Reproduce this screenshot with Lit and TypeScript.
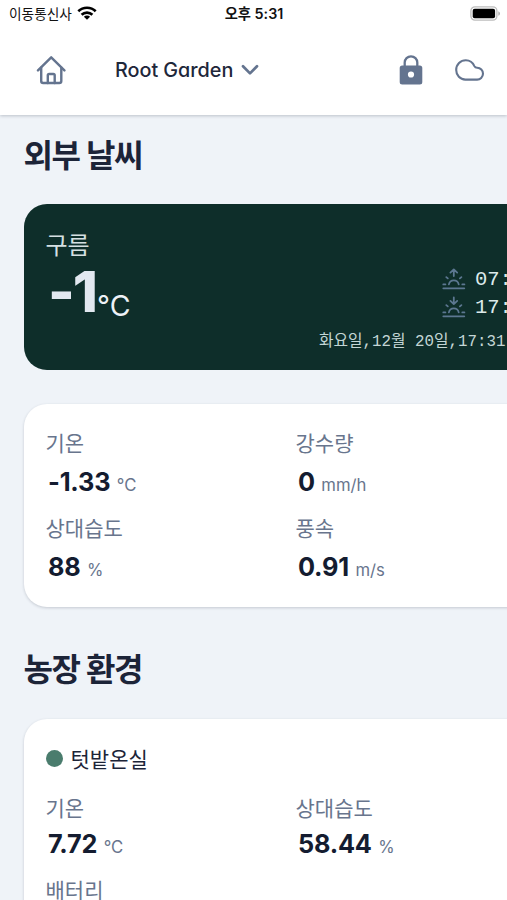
import { LitElement, html, css, svg } from "lit";
import { customElement, property } from "lit/decorators.js";

interface Reading {
  label: string;
  value: string;
  unit: string;
}

const weather: Reading[] = [
  { label: "기온", value: "-1.33", unit: "°C" },
  { label: "강수량", value: "0", unit: "mm/h" },
  { label: "상대습도", value: "88", unit: "%" },
  { label: "풍속", value: "0.91", unit: "m/s" },
];

const farm: Reading[] = [
  { label: "기온", value: "7.72", unit: "°C" },
  { label: "상대습도", value: "58.44", unit: "%" },
  { label: "배터리", value: "", unit: "" },
];

@customElement("reading-grid")
export class ReadingGrid extends LitElement {
  @property({ attribute: false }) items: Reading[] = [];

  static styles = css`
    :host {
      display: grid;
      grid-template-columns: 250px 250px;
      row-gap: var(--reading-gap, 7px);
    }
    .label {
      height: 36px;
      line-height: 38px;
      font-size: 21px;
      color: #68758d;
      white-space: nowrap;
    }
    .line {
      height: var(--reading-height, 42px);
      display: flex;
      align-items: baseline;
      gap: 6.5px;
      padding-left: 2.5px;
      line-height: var(--reading-height, 42px);
      white-space: nowrap;
    }
    .value {
      font-size: 25.3px;
      font-weight: 700;
      letter-spacing: -0.2px;
      color: #141c30;
    }
    .unit {
      font-size: 16.7px;
      color: #68758d;
    }
  `;

  render() {
    return this.items.map(
      (r) => html`<div>
        <div class="label">${r.label}</div>
        <div class="line"><span class="value">${r.value}</span><span class="unit">${r.unit}</span></div>
      </div>`
    );
  }
}

const sun = (arrow: unknown) => html`<svg class="sun" width="24" height="22" viewBox="0 0 24 22">
  <g fill="none" stroke="currentColor" stroke-width="1.8" stroke-linecap="round" stroke-linejoin="round">
    <path d="M1.3 20.3H22.3M1.3 16.4H3.4M20.3 16.4H22.4M4.3 9.1L5.8 10.4M19.4 9.1L17.9 10.4M6.9 16.4A5 5 0 0 1 16.7 16.4" />
    ${arrow}
  </g>
</svg>`;

@customElement("app-root")
export class AppRoot extends LitElement {
  static styles = css`
    :host {
      display: block;
      width: 507px;
      height: 900px;
      overflow: hidden;
      background: #eff3f8;
      color: #1c2438;
      font-family: Inter, "Noto Sans CJK KR", sans-serif;
      font-feature-settings: "cv11";
    }
    .header {
      height: 115px;
      background: #fff;
      box-shadow: 0 1px 3px rgba(30, 41, 59, 0.24);
    }
    .status {
      height: 28px;
      display: grid;
      grid-template-columns: 1fr auto 1fr;
      align-items: center;
      padding: 0 6px 0 9px;
      font-size: 13.7px;
      line-height: 26px;
      color: #111;
    }
    .carrier {
      display: flex;
      align-items: center;
      gap: 5px;
    }
    .carrier svg {
      margin-bottom: 2px;
    }
    .clock {
      font-size: 14.3px;
      font-weight: 600;
      margin-right: 2px;
    }
    .battery {
      justify-self: end;
      display: block;
      margin-bottom: 2px;
    }
    .nav {
      height: 84px;
      display: flex;
      align-items: center;
      padding: 0 22px 0 36px;
      color: #64748f;
    }
    .nav svg {
      display: block;
      flex: none;
    }
    .picker {
      display: flex;
      align-items: center;
      gap: 8px;
      margin-left: 49px;
      margin-right: auto;
    }
    .site {
      font-size: 19.8px;
      font-weight: 500;
      color: #1e273a;
      line-height: 30px;
      letter-spacing: -0.02px;
    }
    .cloud {
      margin-left: 31px;
    }
    .content {
      display: flex;
      flex-direction: column;
      padding-left: 23.5px;
    }
    .heading {
      margin: 0;
      font-size: 32px;
      line-height: 50px;
      font-weight: 600;
      letter-spacing: -1.5px;
      color: #1c2438;
    }
    .first {
      margin-top: 16px;
    }
    .second {
      margin-top: 38px;
    }
    .card {
      width: 520px;
      box-sizing: border-box;
      border-radius: 23px;
      background: #fff;
      padding: 21px 22px 19px;
      box-shadow: 0 1px 3px rgba(30, 41, 59, 0.2);
    }
    .hero {
      margin-top: 23px;
      height: 166px;
      background: #0e2e2a;
      color: #e2e8f0;
      display: grid;
      grid-template-columns: 1fr 190px;
      padding: 25px 34.5px 0 22px;
      box-shadow: none;
    }
    .sky {
      font-size: 24px;
      line-height: 34px;
      color: #d5e0e2;
    }
    .temp {
      display: flex;
      align-items: baseline;
      line-height: 58px;
      padding-left: 2.5px;
    }
    .degrees {
      font-size: 57px;
      font-weight: 800;
      letter-spacing: -2px;
    }
    .celsius {
      margin-left: 1px;
      font-size: 28.5px;
      transform: translateY(4px);
      color: #edf2f7;
    }
    .times {
      display: flex;
      flex-direction: column;
      padding-top: 36px;
      font-family: "Liberation Mono", "Noto Sans CJK KR", monospace;
    }
    .time {
      display: flex;
      align-items: center;
      gap: 9px;
      height: 28px;
      margin-left: 123px;
      font-size: 20.5px;
      color: #dceaea;
    }
    .sun {
      color: #5c7791;
      display: block;
      flex: none;
    }
    .date {
      margin-top: 9px;
      font-size: 15.8px;
      line-height: 24px;
      color: #c4d6d5;
      white-space: pre;
    }
    .current {
      margin-top: 34px;
      height: 203px;
    }
    .sensor {
      margin-top: 24px;
      height: 230px;
      padding-top: 21px;
      --reading-height: 36px;
      --reading-gap: 10px;
    }
    .name {
      display: flex;
      align-items: center;
      gap: 8px;
      height: 36px;
      margin-bottom: 14px;
      font-size: 21px;
      color: #1c2438;
    }
    .dot {
      width: 17px;
      height: 17px;
      border-radius: 50%;
      background: #4a7c6d;
    }
  `;

  render() {
    return html`
      <div class="header">
        <div class="status">
          <div class="carrier">
            <span>이동통신사</span>
            <svg width="20" height="14" viewBox="0 0 20 14">
              <g fill="none" stroke="#000" stroke-width="2.6">
                <path d="M1.3 5.3A12.4 12.4 0 0 1 18.7 5.3" />
                <path d="M4.6 8.8A7.8 7.8 0 0 1 15.4 8.8" />
              </g>
              <path d="M10 13.7L6.9 10.7A4.4 4.4 0 0 1 13.1 10.7Z" fill="#000" />
            </svg>
          </div>
          <span class="clock">오후 5:31</span>
          <svg class="battery" width="31" height="15" viewBox="0 0 31 15">
            <rect x="0.9" y="0.9" width="26" height="13.2" rx="4" fill="none" stroke="#bdbdbd" stroke-width="1.3" />
            <rect x="2.7" y="2.7" width="22.4" height="9.6" rx="2" fill="#000" />
            <path d="M28.4 5.2A2.5 2.5 0 0 1 28.4 9.8Z" fill="#aaa" />
          </svg>
        </div>
        <div class="nav">
          <svg width="30" height="30" viewBox="0 0 30 30">
            <g fill="none" stroke="currentColor" stroke-width="2.4" stroke-linecap="round" stroke-linejoin="round">
              <path d="M2 15.4L15.2 2.3L28.4 15.4" />
              <path d="M5.2 12.8V26Q5.2 28 7.2 28H23.3Q25.3 28 25.3 26V12.8" />
              <path d="M11.8 28V20.3Q11.8 19 13.1 19H17.4Q18.7 19 18.7 20.3V28" />
            </g>
          </svg>
          <div class="picker">
            <span class="site">Root Garden</span>
            <svg width="18" height="12" viewBox="0 0 18 12">
              <path d="M2 2.2L9 9.4L16 2.2" fill="none" stroke="currentColor" stroke-width="2.7" stroke-linecap="round" stroke-linejoin="round" />
            </svg>
          </div>
          <svg width="24" height="30" viewBox="0 0 24 30">
            <path d="M5.7 12V7.6A6.3 6.3 0 0 1 18.3 7.6V12" fill="none" stroke="currentColor" stroke-width="2.3" />
            <path fill="currentColor" fill-rule="evenodd" d="M3.2 10.5H20.8Q23.3 10.5 23.3 13V27Q23.3 29.5 20.8 29.5H3.2Q0.7 29.5 0.7 27V13Q0.7 10.5 3.2 10.5ZM12 16.4A3.1 3.1 0 1 0 12 22.6A3.1 3.1 0 1 0 12 16.4Z" />
          </svg>
          <svg class="cloud" width="31" height="24" viewBox="0 0 31 24">
            <path d="M11.3 21.6H23A5.9 5.9 0 0 0 23.2 9.8Q21.2 9.8 20.4 8.1C18.8 4.4 15.6 2.2 11.8 2.2C6.5 2.2 2.2 6.4 2.2 11.9C2.2 17.4 6.2 21.6 11.3 21.6Z" fill="none" stroke="currentColor" stroke-width="2.1" stroke-linejoin="round" />
          </svg>
        </div>
      </div>
      <div class="content">
        <h1 class="heading first">외부 날씨</h1>
        <div class="card hero">
          <div>
            <div class="sky">구름</div>
            <div class="temp"><span class="degrees">-1</span><span class="celsius">°C</span></div>
          </div>
          <div class="times">
            <div class="time">${sun(svg`<path d="M11.8 8V1.5M8.4 4.6L11.8 1.4L15.2 4.6" />`)}<span>07:</span></div>
            <div class="time">${sun(svg`<path d="M11.8 1.5V8M8.4 4.9L11.8 8.1L15.2 4.9" />`)}<span>17:</span></div>
            <div class="date">화요일,12월 20일,17:31</div>
          </div>
        </div>
        <div class="card current"><reading-grid .items=${weather}></reading-grid></div>
        <h1 class="heading second">농장 환경</h1>
        <div class="card sensor">
          <div class="name"><span class="dot"></span><span>텃밭온실</span></div>
          <reading-grid .items=${farm}></reading-grid>
        </div>
      </div>
    `;
  }
}
